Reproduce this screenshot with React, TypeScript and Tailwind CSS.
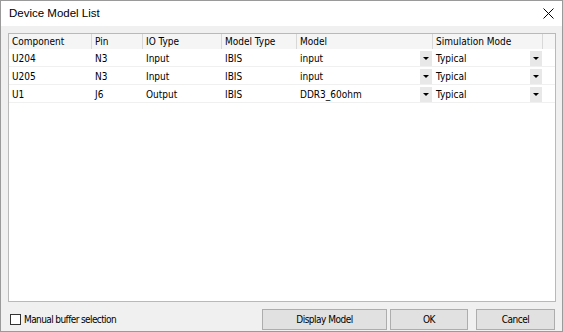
import React from 'react';

const columns = [
  { name: 'Component', w: 'w-[83px]' },
  { name: 'Pin', w: 'w-[51px]' },
  { name: 'IO Type', w: 'w-[79px]' },
  { name: 'Model Type', w: 'w-[75px]' },
  { name: 'Model', w: 'w-[136px]' },
  { name: 'Simulation Mode', w: 'w-[110px]' },
];

const rows = [
  { comp: 'U204', pin: 'N3', io: 'Input', type: 'IBIS', model: 'input', mode: 'Typical' },
  { comp: 'U205', pin: 'N3', io: 'Input', type: 'IBIS', model: 'input', mode: 'Typical' },
  { comp: 'U1', pin: 'J6', io: 'Output', type: 'IBIS', model: 'DDR3_60ohm', mode: 'Typical' },
];

function ComboCell({ value, w }: { value: string; w: string }) {
  return (
    <div className={`${w} h-full flex items-center justify-between pl-[3px] pr-px`}>
      <span>{value}</span>
      <span className="w-[12px] h-[15px] bg-[#e8e8e8] flex items-center justify-center">
        <svg width="6" height="3" viewBox="0 0 6 3">
          <path d="M0 0h6L3 3z" fill="#000" />
        </svg>
      </span>
    </div>
  );
}

export default function App() {
  return (
    <div
      className="w-[563px] h-[332px] bg-[#f0f0f0] border border-[#9a9a9a] flex flex-col text-black overflow-hidden"
      style={{ fontFamily: '"DejaVu Sans Condensed", "DejaVu Sans", sans-serif' }}
    >
      {/* Title bar */}
      <div className="h-[25px] bg-white flex items-center justify-between pl-[8px] pr-[8px] shrink-0">
        <span className="text-[11.5px]" style={{ fontFamily: '"Liberation Sans", Arial, sans-serif' }}>
          Device Model List
        </span>
        <svg width="11" height="11" viewBox="0 0 11 11">
          <path d="M0.5 0.5L10.5 10.5M10.5 0.5L0.5 10.5" stroke="#000" strokeWidth="1" />
        </svg>
      </div>

      {/* Table */}
      <div className="mt-[7px] ml-[7px] mr-[6px] h-[269px] bg-white border border-[#b9b9b9] text-[10px] flex flex-col">
        <div className="h-[15px] flex bg-[#f5f5f5] shrink-0">
          {columns.map(c => (
            <div key={c.name} className={`${c.w} h-full flex items-center pl-[3px] border-r border-[#d8d8d8] leading-none`}>
              {c.name}
            </div>
          ))}
        </div>
        {rows.map((r, i) => (
          <div key={i} className="h-[18px] flex border-b border-[#f0f0f0] pt-px">
            <div className="w-[83px] flex items-center pl-[3px]">{r.comp}</div>
            <div className="w-[51px] flex items-center pl-[3px]">{r.pin}</div>
            <div className="w-[79px] flex items-center pl-[3px]">{r.io}</div>
            <div className="w-[75px] flex items-center pl-[3px]">{r.type}</div>
            <ComboCell value={r.model} w="w-[136px]" />
            <ComboCell value={r.mode} w="w-[110px]" />
          </div>
        ))}
      </div>

      {/* Bottom bar */}
      <div className="flex items-center mt-[7px] pl-[9px] text-[10px]">
        <span className="w-[11px] h-[11px] border border-[#333] bg-white" />
        <span className="ml-[3px] tracking-[-0.6px]">Manual buffer selection</span>
        <div className="ml-auto mr-[7px] flex gap-[3px] tracking-[-0.5px]">
          <button className="w-[125px] h-[21px] bg-[#e1e1e1] border border-[#adadad]">Display Model</button>
          <button className="w-[78px] h-[21px] bg-[#e1e1e1] border border-[#adadad]">OK</button>
          <button className="w-[79px] h-[21px] bg-[#e1e1e1] border border-[#adadad] ml-[5px]">Cancel</button>
        </div>
      </div>
    </div>
  );
}
